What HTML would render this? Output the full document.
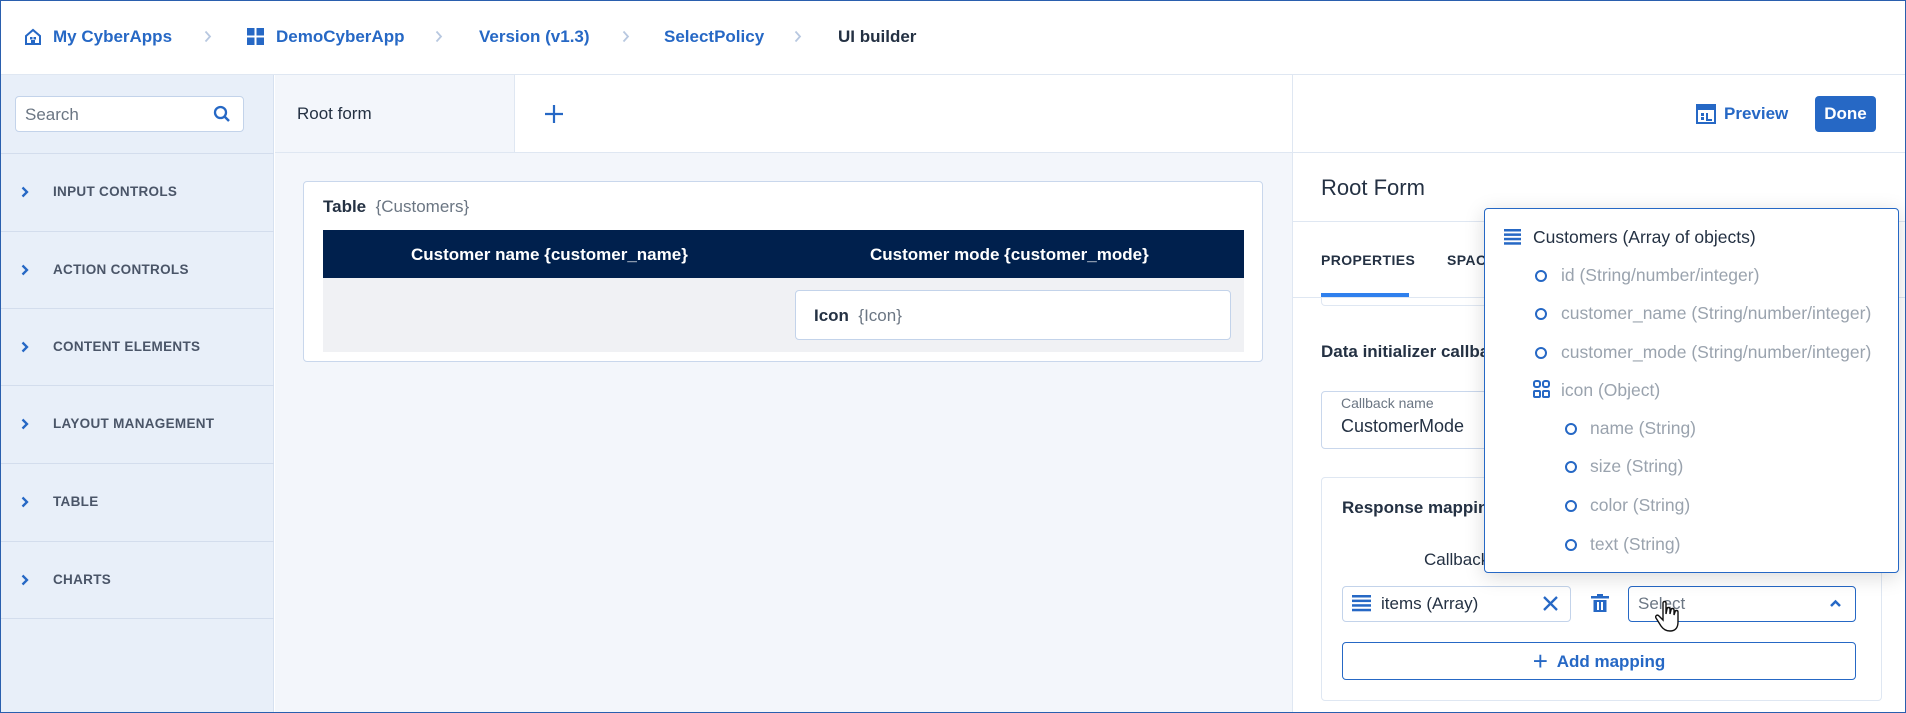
<!DOCTYPE html>
<html><head><meta charset="utf-8"><style>
*{box-sizing:border-box;margin:0;padding:0}
body{width:1906px;height:713px;overflow:hidden;font-family:"Liberation Sans",sans-serif;color:#243143;background:#fff;position:relative}
.a{position:absolute}
.blue{color:#2668c5}
.frame{position:absolute;left:0;top:0;width:1906px;height:713px;border:1px solid #2a5fae;pointer-events:none;z-index:50}
.bc{position:absolute;top:27px;font-size:17px;font-weight:bold;color:#2668c5;white-space:nowrap}
.chev{position:absolute;top:30px}
.side{position:absolute;left:0;top:75px;width:274px;height:638px;background:#e8eff9;border-right:1px solid #d6e1f0}
.si{position:absolute;left:0;width:274px;height:78px;border-top:1px solid #d3dded;font-size:13.5px;font-weight:bold;color:#4a5568;letter-spacing:.3px}
.si span{position:absolute;left:53px;top:30px}
.si svg{position:absolute;left:21px;top:32px}
.dd{font-size:17.5px;color:#9aa3ae;position:absolute;white-space:nowrap}
.circ{position:absolute;width:12px;height:12px;border:2.3px solid #2668c5;border-radius:50%}
</style></head><body>
<div class="frame"></div>
<div class="a" style="left:0;top:74px;width:1906px;height:1px;background:#dfe7f2"></div>
<svg class="a" style="left:24px;top:28px" width="18" height="18" viewBox="0 0 18 18"><path d="M2 8 L9 2 L16 8 V16 H2 Z" fill="none" stroke="#2668c5" stroke-width="2"/><rect x="6" y="9" width="2.5" height="2.5" fill="#2668c5"/><rect x="9.5" y="9" width="2.5" height="2.5" fill="#2668c5"/><rect x="7" y="12" width="4" height="4" fill="#2668c5"/></svg>
<div class="bc" style="left:53px">My CyberApps</div>
<svg class="chev" style="left:204px" width="8" height="13"><path d="M1.5 1.5 L6 6.5 L1.5 11.5" fill="none" stroke="#b8c8e0" stroke-width="1.8"/></svg>
<svg class="a" style="left:247px;top:28px" width="17" height="17"><rect x="0" y="0" width="7.5" height="7.5" fill="#2668c5"/><rect x="9.5" y="0" width="7.5" height="7.5" fill="#2668c5"/><rect x="0" y="9.5" width="7.5" height="7.5" fill="#2668c5"/><rect x="9.5" y="9.5" width="7.5" height="7.5" fill="#2668c5"/></svg>
<div class="bc" style="left:276px">DemoCyberApp</div>
<svg class="chev" style="left:435px" width="8" height="13"><path d="M1.5 1.5 L6 6.5 L1.5 11.5" fill="none" stroke="#b8c8e0" stroke-width="1.8"/></svg>
<div class="bc" style="left:479px">Version (v1.3)</div>
<svg class="chev" style="left:622px" width="8" height="13"><path d="M1.5 1.5 L6 6.5 L1.5 11.5" fill="none" stroke="#b8c8e0" stroke-width="1.8"/></svg>
<div class="bc" style="left:664px">SelectPolicy</div>
<svg class="chev" style="left:794px" width="8" height="13"><path d="M1.5 1.5 L6 6.5 L1.5 11.5" fill="none" stroke="#b8c8e0" stroke-width="1.8"/></svg>
<div class="bc" style="left:838px;color:#243143">UI builder</div>

<div class="side">
 <div class="a" style="left:15px;top:21px;width:229px;height:36px;background:#fff;border:1px solid #c3d3ea;border-radius:4px"></div>
 <div class="a" style="left:25px;top:30px;font-size:17px;color:#6b7683">Search</div>
 <svg class="a" style="left:213px;top:30px" width="18" height="18"><circle cx="7.5" cy="7.5" r="5.5" fill="none" stroke="#2668c5" stroke-width="2.3"/><path d="M11.5 11.5 L16 16" stroke="#2668c5" stroke-width="2.5"/></svg>
 <div class="si" style="top:78px"><svg width="8" height="12"><path d="M1.5 1.5 L6 6 L1.5 10.5" fill="none" stroke="#2668c5" stroke-width="2.3"/></svg><span>INPUT CONTROLS</span></div>
 <div class="si" style="top:156px"><svg width="8" height="12"><path d="M1.5 1.5 L6 6 L1.5 10.5" fill="none" stroke="#2668c5" stroke-width="2.3"/></svg><span>ACTION CONTROLS</span></div>
 <div class="si" style="top:233px"><svg width="8" height="12"><path d="M1.5 1.5 L6 6 L1.5 10.5" fill="none" stroke="#2668c5" stroke-width="2.3"/></svg><span>CONTENT ELEMENTS</span></div>
 <div class="si" style="top:310px"><svg width="8" height="12"><path d="M1.5 1.5 L6 6 L1.5 10.5" fill="none" stroke="#2668c5" stroke-width="2.3"/></svg><span>LAYOUT MANAGEMENT</span></div>
 <div class="si" style="top:388px"><svg width="8" height="12"><path d="M1.5 1.5 L6 6 L1.5 10.5" fill="none" stroke="#2668c5" stroke-width="2.3"/></svg><span>TABLE</span></div>
 <div class="si" style="top:466px;border-bottom:1px solid #d3dded"><svg width="8" height="12"><path d="M1.5 1.5 L6 6 L1.5 10.5" fill="none" stroke="#2668c5" stroke-width="2.3"/></svg><span>CHARTS</span></div>
</div>

<div class="a" style="left:275px;top:75px;width:1017px;height:638px;background:#f3f6fb"></div>
<div class="a" style="left:275px;top:75px;width:240px;height:78px;background:#f3f6fb;border-right:1px solid #dfe7f2"></div>
<div class="a" style="left:515px;top:75px;width:777px;height:78px;background:#fff"></div>
<div class="a" style="left:275px;top:152px;width:1631px;height:1px;background:#dfe7f2"></div>
<div class="a" style="left:297px;top:104px;font-size:17px;color:#243143">Root form</div>
<svg class="a" style="left:545px;top:105px" width="18" height="18"><path d="M9 0 V18 M0 9 H18" stroke="#2668c5" stroke-width="2.2"/></svg>

<div class="a" style="left:303px;top:181px;width:960px;height:181px;background:#fff;border:1px solid #c9d7ec;border-radius:4px"></div>
<div class="a" style="left:323px;top:197px;font-size:17px"><b style="font-weight:bold;color:#243143">Table</b> <span style="color:#6b7683">&nbsp;{Customers}</span></div>
<div class="a" style="left:323px;top:230px;width:921px;height:48px;background:#00204d"></div>
<div class="a" style="left:411px;top:245px;font-size:17px;font-weight:bold;color:#fff">Customer name {customer_name}</div>
<div class="a" style="left:870px;top:245px;font-size:17px;font-weight:bold;color:#fff">Customer mode {customer_mode}</div>
<div class="a" style="left:323px;top:278px;width:921px;height:74px;background:#f0f1f4"></div>
<div class="a" style="left:795px;top:290px;width:436px;height:50px;background:#fff;border:1px solid #c3d3ea;border-radius:4px"></div>
<div class="a" style="left:814px;top:306px;font-size:17px"><b>Icon</b> <span style="color:#6b7683">&nbsp;{Icon}</span></div>

<div class="a" style="left:1292px;top:75px;width:1px;height:638px;background:#dfe7f2"></div>
<svg class="a" style="left:1696px;top:104px" width="20" height="20"><rect x="1" y="1" width="18" height="18" fill="none" stroke="#2668c5" stroke-width="2"/><rect x="1" y="1" width="18" height="5" fill="#2668c5"/><rect x="5" y="9" width="3" height="3" fill="#2668c5"/><rect x="5" y="13" width="3" height="3" fill="#2668c5"/><path d="M11 9 V16 H16" fill="none" stroke="#2668c5" stroke-width="2"/></svg>
<div class="a" style="left:1724px;top:104px;font-size:17px;font-weight:bold;color:#2668c5">Preview</div>
<div class="a" style="left:1815px;top:96px;width:61px;height:36px;background:#2668c5;border-radius:4px;color:#fff;font-size:17px;font-weight:bold;text-align:center;line-height:36px">Done</div>

<div class="a" style="left:1321px;top:175px;font-size:22px;color:#243143">Root Form</div>
<div class="a" style="left:1293px;top:221px;width:613px;height:1px;background:#dfe7f2"></div>
<div class="a" style="left:1321px;top:252px;font-size:14px;font-weight:bold;letter-spacing:.4px">PROPERTIES</div>
<div class="a" style="left:1447px;top:252px;font-size:14px;font-weight:bold;letter-spacing:.4px">SPACING</div>
<div class="a" style="left:1321px;top:293px;width:88px;height:4px;background:#2f80ed"></div>
<div class="a" style="left:1293px;top:297px;width:613px;height:1px;background:#dfe7f2"></div>
<div class="a" style="left:1321px;top:298px;width:561px;height:8px;border:1px solid #dfe7f2;border-top:none;border-radius:0 0 4px 4px"></div>
<div class="a" style="left:1321px;top:342px;font-size:17px;font-weight:bold">Data initializer callback</div>
<div class="a" style="left:1321px;top:391px;width:561px;height:58px;border:1px solid #c9d7ec;border-radius:4px"></div>
<div class="a" style="left:1341px;top:395px;font-size:14px;color:#6b7683">Callback name</div>
<div class="a" style="left:1341px;top:416px;font-size:18px;color:#243143">CustomerMode</div>

<div class="a" style="left:1321px;top:477px;width:561px;height:224px;border:1px solid #dfe7f2;border-radius:4px"></div>
<div class="a" style="left:1342px;top:498px;font-size:17px;font-weight:bold">Response mapping</div>
<div class="a" style="left:1424px;top:550px;font-size:17px">Callback</div>
<div class="a" style="left:1342px;top:586px;width:229px;height:36px;border:1px solid #c3d3ea;border-radius:4px"></div>
<svg class="a" style="left:1352px;top:595px" width="19" height="17"><rect y="0" width="19" height="2.5" fill="#2668c5"/><rect y="4.6" width="19" height="2.5" fill="#2668c5"/><rect y="9.2" width="19" height="2.5" fill="#2668c5"/><rect y="13.8" width="19" height="2.5" fill="#2668c5"/></svg>
<div class="a" style="left:1381px;top:594px;font-size:17px">items (Array)</div>
<svg class="a" style="left:1543px;top:596px" width="15" height="15"><path d="M1 1 L14 14 M14 1 L1 14" stroke="#2668c5" stroke-width="2.3"/></svg>
<svg class="a" style="left:1591px;top:594px" width="18" height="19"><rect x="0" y="2" width="18" height="2.5" fill="#2668c5"/><rect x="6" y="0" width="6" height="2.5" fill="#2668c5"/><path d="M2.5 6 H15.5 V18 H2.5 Z" fill="#2668c5"/><rect x="6" y="8" width="2" height="8" fill="#fff"/><rect x="10" y="8" width="2" height="8" fill="#fff"/></svg>
<div class="a" style="left:1628px;top:586px;width:228px;height:36px;border:1px solid #2668c5;border-radius:4px"></div>
<div class="a" style="left:1638px;top:594px;font-size:17px;color:#6b7683">Select</div>
<svg class="a" style="left:1829px;top:599px" width="13" height="9"><path d="M2 7 L6.5 2.5 L11 7" fill="none" stroke="#2668c5" stroke-width="2.5"/></svg>
<svg class="a" style="left:1655px;top:600px" width="28" height="34" viewBox="0 0 28 34"><path d="M8 3 C8 1 11 1 11 3 V14 L12 9 C12 7 15 7 15 9 V14 L16 10 C16 8 19 8 19 10 V15 L20 12 C20 10 23 10 23 12 V22 C23 28 20 31 15 31 C11 31 8 29 6 26 L1 18 C0 16 2 14 4 16 L8 20 Z" fill="#fff" stroke="#111" stroke-width="1.4"/></svg>
<div class="a" style="left:1342px;top:642px;width:514px;height:38px;border:1px solid #2668c5;border-radius:4px;text-align:center;line-height:36px;font-size:17px;font-weight:bold;color:#2668c5"><span style="font-size:26px;font-weight:300;vertical-align:-3px">+</span>&nbsp; Add mapping</div>

<div class="a" style="left:1484px;top:208px;width:415px;height:365px;background:#fff;border:1px solid #2668c5;border-radius:4px;box-shadow:0 4px 20px rgba(0,0,0,.15)"></div>
<svg class="a" style="left:1504px;top:229px" width="17" height="16"><rect y="0" width="17" height="2.5" fill="#2668c5"/><rect y="4.4" width="17" height="2.5" fill="#2668c5"/><rect y="8.8" width="17" height="2.5" fill="#2668c5"/><rect y="13.2" width="17" height="2.5" fill="#2668c5"/></svg>
<div class="a" style="left:1533px;top:227px;font-size:17.5px;color:#243143">Customers (Array of objects)</div>
<div class="circ" style="left:1535px;top:270px"></div><div class="dd" style="left:1561px;top:265px">id (String/number/integer)</div>
<div class="circ" style="left:1535px;top:308px"></div><div class="dd" style="left:1561px;top:303px">customer_name (String/number/integer)</div>
<div class="circ" style="left:1535px;top:347px"></div><div class="dd" style="left:1561px;top:342px">customer_mode (String/number/integer)</div>
<svg class="a" style="left:1533px;top:380px" width="17" height="18"><rect x="1" y="1" width="6" height="6" rx="2" fill="none" stroke="#2668c5" stroke-width="2"/><rect x="10" y="1" width="6" height="6" rx="2" fill="none" stroke="#2668c5" stroke-width="2"/><rect x="1" y="11" width="6" height="6" rx="1" fill="none" stroke="#2668c5" stroke-width="2"/><rect x="10" y="11" width="6" height="6" rx="1" fill="none" stroke="#2668c5" stroke-width="2"/></svg>
<div class="dd" style="left:1561px;top:380px">icon (Object)</div>
<div class="circ" style="left:1565px;top:423px"></div><div class="dd" style="left:1590px;top:418px">name (String)</div>
<div class="circ" style="left:1565px;top:461px"></div><div class="dd" style="left:1590px;top:456px">size (String)</div>
<div class="circ" style="left:1565px;top:500px"></div><div class="dd" style="left:1590px;top:495px">color (String)</div>
<div class="circ" style="left:1565px;top:539px"></div><div class="dd" style="left:1590px;top:534px">text (String)</div>
</body></html>
